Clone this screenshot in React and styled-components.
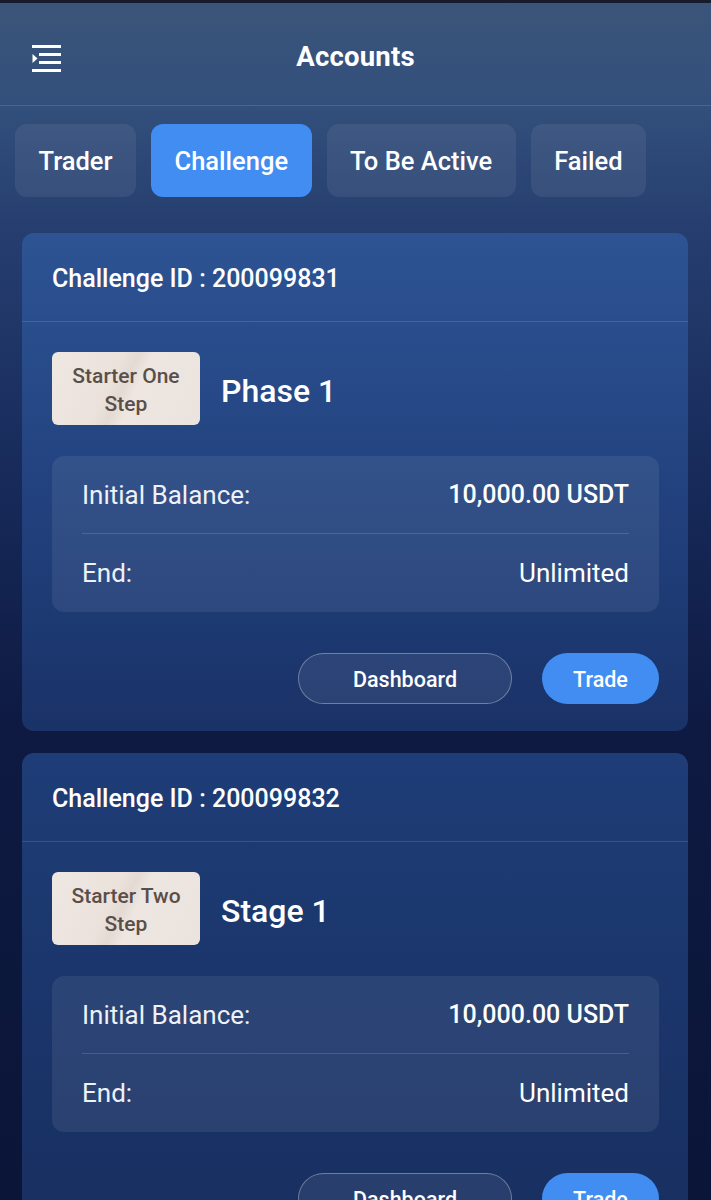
import React from "react";
import styled, { createGlobalStyle } from "styled-components";

const Global = createGlobalStyle`
  * { box-sizing: border-box; }
  html, body { margin: 0; padding: 0; }
  body {
    font-family: Roboto, "Liberation Sans", sans-serif;
    color: #fff;
    min-height: 1200px;
    background: linear-gradient(180deg, #3b5579 0px, #33507c 100px, #263f70 220px, #172a5a 480px, #0e1a42 720px, #0b1538 1200px);
  }
`;

const Page = styled.div`
  width: 711px;
  min-height: 1200px;
  border-top: 3px solid #161c2a;
  display: flex;
  flex-direction: column;
`;

const Header = styled.header`
  height: 103px;
  padding-top: 4px;
  display: flex;
  align-items: center;
  justify-content: center;
  position: relative;
  border-bottom: 1px solid rgba(255, 255, 255, 0.13);
`;

const MenuButton = styled.button`
  position: absolute;
  left: 32px;
  top: 40px;
  width: 30px;
  height: 29px;
  padding: 0;
  border: 0;
  background: none;
  display: flex;
`;

const Title = styled.h1`
  margin: 0;
  font-size: 27.5px;
  font-weight: 700;
  letter-spacing: 0.2px;
  color: #fff;
`;

const Tabs = styled.nav`
  display: flex;
  gap: 15px;
  padding: 18px 15px 0;
`;

const Tab = styled.button`
  height: 73px;
  padding: 0 23.5px;
  border: 0;
  border-radius: 12px;
  font-family: inherit;
  font-size: 25.5px;
  font-weight: 500;
  color: #fff;
  background: ${(p) => (p.$active ? "#418df2" : "rgba(255,255,255,0.07)")};
`;

const List = styled.div`
  display: flex;
  flex-direction: column;
  gap: 22px;
  padding: 36px 23px 0 22px;
`;

const Card = styled.section`
  border-radius: 12px;
  background: linear-gradient(180deg, rgba(59, 120, 210, 0.37), rgba(59, 120, 210, 0.26));
  display: flex;
  flex-direction: column;
`;

const CardHeader = styled.div`
  height: 89px;
  padding: 2px 30px 0;
  display: flex;
  align-items: center;
  font-size: 25px;
  font-weight: 500;
  border-bottom: 1px solid rgba(255, 255, 255, 0.13);
`;

const CardBody = styled.div`
  padding: 30px 29px 27px 30px;
  display: flex;
  flex-direction: column;
`;

const PlanRow = styled.div`
  display: flex;
  align-items: center;
  gap: 21px;
`;

const Badge = styled.div`
  width: 148px;
  height: 73px;
  border-radius: 6px;
  background: linear-gradient(115deg, #efe7e2 0%, #ebe2dc 40%, #e4dad3 48%, #eee6e1 56%, #ebe3dd 100%);
  color: #5a4f48;
  font-size: 21px;
  line-height: 28px;
  font-weight: 500;
  text-align: center;
  display: flex;
  align-items: center;
  justify-content: center;
  padding: 2px 8px 0;
`;

const Phase = styled.div`
  font-size: 32px;
  font-weight: 500;
  padding-top: 4px;
`;

const InfoBox = styled.div`
  margin-top: 31px;
  border-radius: 12px;
  background: rgba(255, 255, 255, 0.075);
  padding: 0 30px;
`;

const InfoRow = styled.div`
  height: 77px;
  display: flex;
  align-items: center;
  justify-content: space-between;
  font-size: 26px;
  & + & {
    border-top: 1px solid rgba(255, 255, 255, 0.14);
    height: 79px;
  }
`;

const Label = styled.span`
  color: #eef1f7;
  font-weight: 400;
`;

const Value = styled.span`
  color: #fff;
  font-weight: ${(p) => (p.$strong ? 500 : 400)};
  font-size: ${(p) => (p.$strong ? "25px" : "26px")};
`;

const Actions = styled.div`
  margin-top: 41px;
  display: flex;
  justify-content: flex-end;
  gap: 30px;
`;

const Pill = styled.button`
  height: 51px;
  width: ${(p) => p.$w}px;
  border-radius: 26px;
  font-family: inherit;
  font-size: 21.5px;
  font-weight: 500;
  padding-top: 3px;
  color: #fff;
  border: ${(p) => (p.$primary ? "0" : "1.5px solid rgba(255,255,255,0.32)")};
  background: ${(p) => (p.$primary ? "#418df2" : "rgba(255,255,255,0.07)")};
`;

const MenuIcon = () => (
  <svg width="30" height="29" viewBox="0 0 30 29" fill="none">
    <g stroke="#fff" strokeWidth="3">
      <line x1="0" y1="3.5" x2="29" y2="3.5" />
      <line x1="7" y1="11.5" x2="29" y2="11.5" />
      <line x1="7" y1="19.5" x2="29" y2="19.5" />
      <line x1="0" y1="27.5" x2="29" y2="27.5" />
    </g>
    <polygon points="0.5,11 5.5,15.5 0.5,20" fill="#fff" />
  </svg>
);

const accounts = [
  { id: "200099831", plan: ["Starter One", "Step"], phase: "Phase 1" },
  { id: "200099832", plan: ["Starter Two", "Step"], phase: "Stage 1" },
];

const tabs = ["Trader", "Challenge", "To Be Active", "Failed"];

export default function App() {
  return (
    <>
      <Global />
      <Page>
        <Header>
          <MenuButton aria-label="menu">
            <MenuIcon />
          </MenuButton>
          <Title>Accounts</Title>
        </Header>
        <Tabs>
          {tabs.map((t) => (
            <Tab key={t} $active={t === "Challenge"}>
              {t}
            </Tab>
          ))}
        </Tabs>
        <List>
          {accounts.map((a) => (
            <Card key={a.id}>
              <CardHeader>Challenge ID : {a.id}</CardHeader>
              <CardBody>
                <PlanRow>
                  <Badge>
                    {a.plan[0]}
                    <br />
                    {a.plan[1]}
                  </Badge>
                  <Phase>{a.phase}</Phase>
                </PlanRow>
                <InfoBox>
                  <InfoRow>
                    <Label>Initial Balance:</Label>
                    <Value $strong>10,000.00 USDT</Value>
                  </InfoRow>
                  <InfoRow>
                    <Label>End:</Label>
                    <Value>Unlimited</Value>
                  </InfoRow>
                </InfoBox>
                <Actions>
                  <Pill $w={214}>Dashboard</Pill>
                  <Pill $w={117} $primary>
                    Trade
                  </Pill>
                </Actions>
              </CardBody>
            </Card>
          ))}
        </List>
      </Page>
    </>
  );
}
